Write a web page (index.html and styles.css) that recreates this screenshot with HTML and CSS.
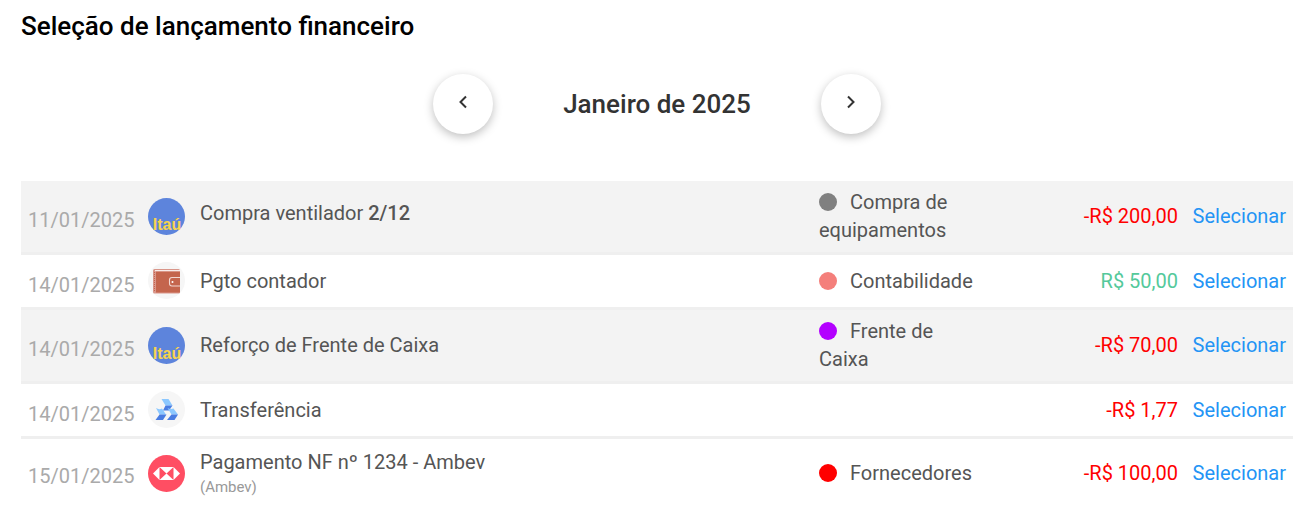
FILE: index.html
```html
<!DOCTYPE html>
<html lang="pt-BR">
<head>
<meta charset="utf-8">
<meta name="viewport" content="width=device-width, initial-scale=1">
<title>Seleção de lançamento financeiro</title>
<link rel="stylesheet" href="styles.css">
</head>
<body>
<main class="page">
  <h1 class="title">Seleção de lançamento financeiro</h1>
  <nav class="month" aria-label="Mês">
    <button class="round" type="button" aria-label="Mês anterior"><svg width="10" height="14" viewBox="0 0 10 14"><path d="M8 1.5 2.5 7 8 12.5"/></svg></button>
    <h2 class="month-name">Janeiro de 2025</h2>
    <button class="round" type="button" aria-label="Próximo mês"><svg width="10" height="14" viewBox="0 0 10 14"><path d="M2 1.5 7.5 7 2 12.5"/></svg></button>
  </nav>
  <table class="entries">
    <colgroup><col class="c-date"><col class="c-icon"><col class="c-desc"><col class="c-cat"><col class="c-value"><col class="c-action"></colgroup>
    <tbody>
    <tr>
      <td class="date">11/01/2025</td>
      <td><svg class="bank" viewBox="0 0 37 37"><circle cx="18.5" cy="18.5" r="18.5" fill="#5d84dc"/><text class="itau-text" x="19" y="32" text-anchor="middle">Itaú</text></svg></td>
      <td class="desc installment">Compra ventilador <span class="part">2/12</span></td>
      <td><span class="dot gray"></span>Compra de equipamentos</td>
      <td class="value out">-R$ 200,00</td>
      <td class="action"><a href="#">Selecionar</a></td>
    </tr>
    <tr>
      <td class="date">14/01/2025</td>
      <td><svg class="bank" viewBox="0 0 37 37"><circle cx="18.5" cy="18.5" r="18.5" fill="#f6f6f6"/><rect x="5" y="7" width="27" height="24.500" rx="1.500" fill="#d9968a"/><path d="M8 9.500h24v21H8z" fill="#c4654d"/><path d="M7 8.700h25" stroke="#fff" stroke-width="1"/><path d="M6.500 10v20" stroke="#c4654d" stroke-width="1" stroke-dasharray="1 1"/><path d="M32 15.500H24q-2.500 0-2.500 2.500v3.500q0 2.500 2.500 2.500h8" fill="#c4654d" stroke="#f2d8d2" stroke-width="1.100"/><circle cx="24.500" cy="20" r="1" fill="#fff"/></svg></td>
      <td class="desc">Pgto contador</td>
      <td><span class="dot coral"></span>Contabilidade</td>
      <td class="value in">R$ 50,00</td>
      <td class="action"><a href="#">Selecionar</a></td>
    </tr>
    <tr>
      <td class="date">14/01/2025</td>
      <td><svg class="bank" viewBox="0 0 37 37"><circle cx="18.5" cy="18.5" r="18.5" fill="#5d84dc"/><text class="itau-text" x="19" y="32" text-anchor="middle">Itaú</text></svg></td>
      <td class="desc">Reforço de Frente de Caixa</td>
      <td><span class="dot purple"></span>Frente de Caixa</td>
      <td class="value out">-R$ 70,00</td>
      <td class="action"><a href="#">Selecionar</a></td>
    </tr>
    <tr>
      <td class="date">14/01/2025</td>
      <td><svg class="bank" viewBox="0 0 37 37"><circle cx="18.5" cy="18.5" r="18.5" fill="#f6f6f6"/><path d="M13.500 8h7l4 6.500h-7z" fill="#8cc8ff"/><path d="M17.500 14.500h7L21 19.500h-6z" fill="#4a7de2"/><path d="M8 17q3 2 6 .5l4 6h-6.500z" fill="#8cc8ff"/><path d="M11.500 23.500H18.500L15 29H7.500z" fill="#4a7de2"/><path d="M19.500 17q3 1.500 6 .5l4.500 6h-6.500z" fill="#8cc8ff"/><path d="M23.500 23.500H30L26.500 29H19z" fill="#4a7de2"/></svg></td>
      <td class="desc">Transferência</td>
      <td></td>
      <td class="value out">-R$ 1,77</td>
      <td class="action"><a href="#">Selecionar</a></td>
    </tr>
    <tr>
      <td class="date">15/01/2025</td>
      <td><svg class="bank" viewBox="0 0 37 37"><circle cx="18.5" cy="18.5" r="18.5" fill="#ff4e63"/><path d="M5 18.500 11.500 12h14L32 18.500 25.500 25h-14z" fill="#fff"/><path d="M11.500 12v13l7-6.500zM25.500 12v13l-7-6.500z" fill="#ff4e63"/></svg></td>
      <td class="desc">Pagamento NF nº 1234 - Ambev<small class="payee">(Ambev)</small></td>
      <td><span class="dot red"></span>Fornecedores</td>
      <td class="value out">-R$ 100,00</td>
      <td class="action"><a href="#">Selecionar</a></td>
    </tr>
    </tbody>
  </table>
</main>
</body>
</html>
```
FILE: styles.css
```css
body {
  margin: 0;
  background: #fff;
  color: #555;
  font: 400 20px/28px Roboto, "Liberation Sans", sans-serif;
}
.page { padding: 8px 9px 0 21px; }
.title {
  margin: 0;
  color: #000;
  font-size: 26px;
  line-height: 36px;
  font-weight: 500;
}
.month {
  display: flex;
  justify-content: center;
  align-items: center;
  gap: 70px;
  margin: 30px 0 47px;
}
.month-name {
  margin: 0;
  color: #333;
  font-size: 26px;
  line-height: 36px;
  font-weight: 500;
}
.round {
  width: 60px;
  height: 60px;
  padding: 0 0 4px;
  border: 0;
  border-radius: 50%;
  background: #fff;
  box-shadow: 0 3px 10px rgba(0, 0, 0, .25);
  cursor: pointer;
}
.round svg {
  display: block;
  margin: auto;
  fill: none;
  stroke: #333;
  stroke-width: 2;
}
.entries {
  width: 100%;
  table-layout: fixed;
  border-collapse: separate;
  border-spacing: 0;
}
.c-date { width: 120px; }
.c-icon { width: 52px; }
.c-cat { width: 172px; }
.c-value { width: 201px; }
.c-action { width: 108px; }
.entries td {
  padding: 7px 7px 8px;
  border-bottom: 3px solid #efefef;
  vertical-align: middle;
}
.entries tr:nth-child(odd) td { background: #f3f3f3; }
.entries tr:last-child td {
  padding-top: 9px;
  border-bottom: 0;
  background: #fff;
}
.entries .date,
.entries tr:last-child .date {
  padding: 15px 0 8px 7px;
  color: #aaa;
}
.entries .installment { padding-bottom: 14px; }
.part { font-weight: 500; }
.bank { display: block; width: 37px; height: 37px; }
.itau-text {
  font: 700 16px "Liberation Sans", sans-serif;
  fill: #f8d34c;
}
.payee {
  display: block;
  color: #999;
  font-size: 15px;
  line-height: 22px;
}
.dot {
  display: inline-block;
  width: 18px;
  height: 18px;
  margin-right: 13px;
  border-radius: 50%;
  vertical-align: -2px;
}
.gray { background: #808080; }
.coral { background: #f47f7b; }
.purple { background: #b300ff; }
.red { background: #f00; }
.value { text-align: right; white-space: nowrap; }
.out { color: #f00; }
.in { color: #54c99b; }
.entries .action { text-align: right; }
.action a { color: #2394f5; text-decoration: none; }
```
